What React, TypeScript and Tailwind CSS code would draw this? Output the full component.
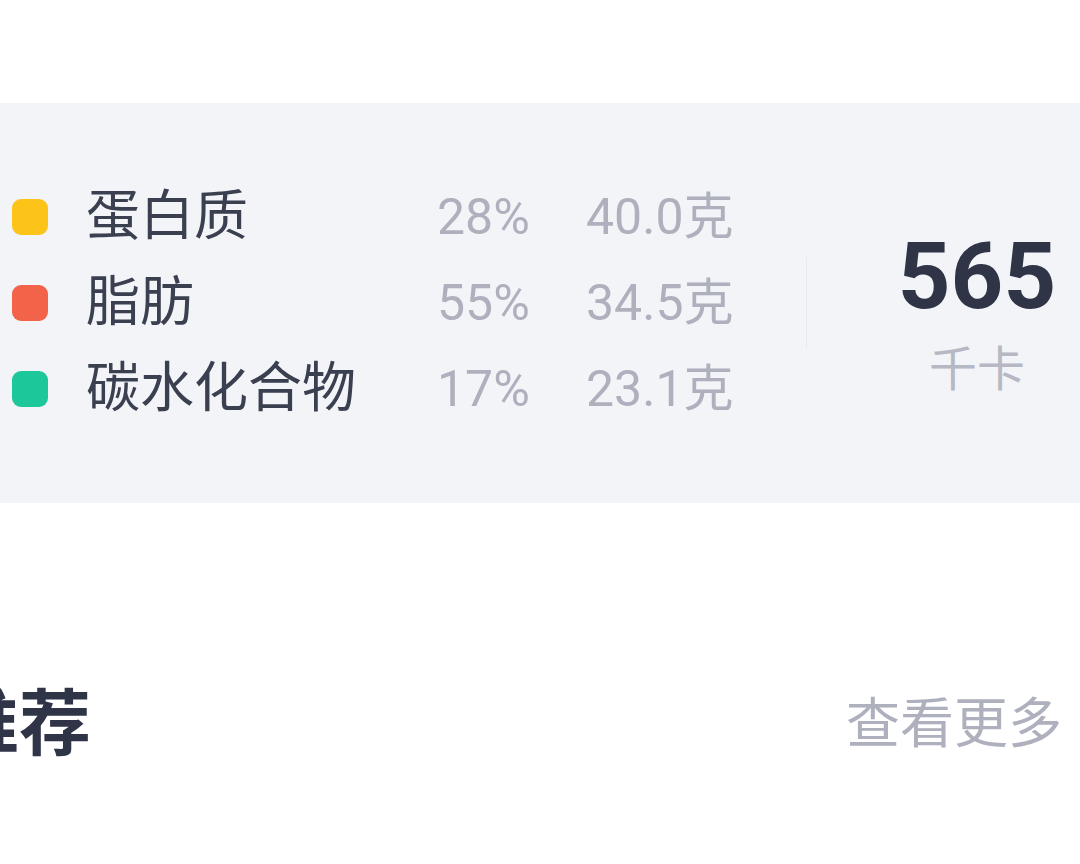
import React from 'react';

type Nutrient = {
  name: string;
  color: string;
  percent: string;
  grams: string;
};

const nutrients: Nutrient[] = [
  { name: '蛋白质', color: 'bg-[#fcc419]', percent: '28%', grams: '40.0克' },
  { name: '脂肪', color: 'bg-[#f2634a]', percent: '55%', grams: '34.5克' },
  { name: '碳水化合物', color: 'bg-[#1cc79a]', percent: '17%', grams: '23.1克' },
];

const font = { fontFamily: 'Roboto, "Noto Sans CJK SC", sans-serif' };

export default function App() {
  return (
    <div className="w-[1080px] h-[864px] overflow-hidden bg-white" style={font}>
      <div className="h-[103px]" />

      {/* nutrition summary */}
      <div className="h-[400px] bg-[#f3f4f8] flex items-center">
        <div className="flex flex-col pl-[12px]">
          {nutrients.map((n) => (
            <div key={n.name} className="h-[86px] flex items-center">
              <span className={`w-[36px] h-[36px] rounded-[9px] ${n.color}`} />
              <span className="ml-[38px] w-[351px] text-[54px] leading-none text-[#3b4050]">{n.name}</span>
              <span className="w-[149px] text-[50px] leading-none text-[#aeb1bd]">{n.percent}</span>
              <span className="text-[50px] leading-none text-[#aeb1bd]">{n.grams}</span>
            </div>
          ))}
        </div>
        <div className="ml-auto flex items-center">
          <div className="w-px h-[92px] bg-[#e9eaef]" />
          <div className="ml-[70px] w-[200px] pt-[19px] flex flex-col items-center">
            <span className="text-[92px] leading-none font-bold text-[#2f3447]">565</span>
            <span className="mt-[23px] text-[48px] leading-none text-[#b6b9c4]">千卡</span>
          </div>
          <div className="w-[3px]" />
        </div>
      </div>

      {/* recommend header */}
      <div className="mt-[186px] flex items-center justify-between pr-[18px]">
        <h2 className="ml-[-53px] text-[72px] leading-none font-bold text-[#2f3447]">推荐</h2>
        <span className="text-[54px] leading-none text-[#aeb1bd]">查看更多</span>
      </div>
    </div>
  );
}
